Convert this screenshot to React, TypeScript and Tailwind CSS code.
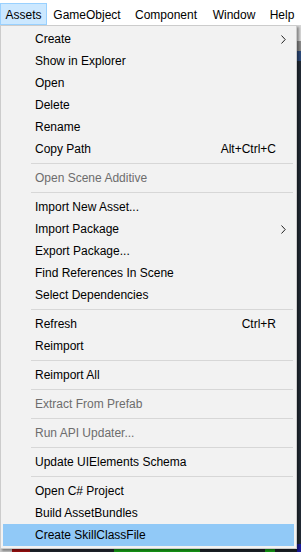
type Entry = { label: string; shortcut?: string; sub?: boolean; disabled?: boolean; active?: boolean } | 'sep';

const entries: Entry[] = [
  { label: 'Create', sub: true },
  { label: 'Show in Explorer' },
  { label: 'Open' },
  { label: 'Delete' },
  { label: 'Rename' },
  { label: 'Copy Path', shortcut: 'Alt+Ctrl+C' },
  'sep',
  { label: 'Open Scene Additive', disabled: true },
  'sep',
  { label: 'Import New Asset...' },
  { label: 'Import Package', sub: true },
  { label: 'Export Package...' },
  { label: 'Find References In Scene' },
  { label: 'Select Dependencies' },
  'sep',
  { label: 'Refresh', shortcut: 'Ctrl+R' },
  { label: 'Reimport' },
  'sep',
  { label: 'Reimport All' },
  'sep',
  { label: 'Extract From Prefab', disabled: true },
  'sep',
  { label: 'Run API Updater...', disabled: true },
  'sep',
  { label: 'Update UIElements Schema' },
  'sep',
  { label: 'Open C# Project' },
  { label: 'Build AssetBundles' },
  { label: 'Create SkillClassFile', active: true },
];

const menus = [
  { name: 'Assets', w: 'w-[47px]' },
  { name: 'GameObject', w: 'w-[80px]' },
  { name: 'Component', w: 'w-[78px]' },
  { name: 'Window', w: 'w-[58px]' },
  { name: 'Help', w: 'w-[38px]' },
];

// small thin submenu arrow, like the windows one
function SubArrow() {
  return (
    <svg width="5" height="9" viewBox="0 0 5 9" fill="none" stroke="#222" strokeWidth="1">
      <polyline points="0.5,0.5 4.2,4.5 0.5,8.5" />
    </svg>
  );
}

export default function App() {
  return (
    <div className="w-[301px] h-[552px] overflow-hidden bg-[#222a35] flex flex-col text-[12px] text-black" style={{ fontFamily: '"Liberation Sans", Arial, sans-serif' }}>
      {/* menu bar */}
      <div className="h-[25px] bg-white flex items-end shrink-0">
        {menus.map((m, i) => (
          <div key={m.name}
            className={`${m.w} h-[22px] flex items-center justify-center shrink-0 border pt-px ${i === 0 ? 'bg-[#cce8ff] border-[#99d1ff]' : 'border-transparent'}`}>
            {m.name}
          </div>
        ))}
      </div>

      <div className="flex flex-1 min-h-0">
        {/* dropdown */}
        <div className="w-[297px] shrink-0 flex flex-col">
          <div className="h-[524px] bg-[#f2f2f2] border border-[#cccccc] p-[2px] shadow-[2px_2px_2px_rgba(0,0,0,0.35)] relative z-10">
            {entries.map((e, i) =>
              e === 'sep' ? (
                <div key={i} className="h-[7px] flex items-center pl-[28px] pr-[1px]">
                  <div className="h-px w-full bg-[#d7d7d7]" />
                </div>
              ) : (
                <div key={i} className={`h-[22px] flex items-center pl-[32px] ${e.active ? 'bg-[#91c9f7]' : ''} ${e.disabled ? 'text-[#6d6d6d]' : ''}`}>
                  <span className="flex-1 whitespace-nowrap">{e.label}</span>
                  {e.shortcut && <span className="whitespace-nowrap">{e.shortcut}</span>}
                  <span className="w-[18px] flex items-center pl-[5px]">
                    {e.sub && <SubArrow />}
                  </span>
                </div>
              )
            )}
          </div>
          {/* editor bits below the menu */}
          <div className="flex-1 flex">
            <div className="w-[12px] bg-[#c8c8c8]" />
            <div className="w-[18px] bg-[#a01010]" />
            <div className="w-[84px] bg-[#20262e]" />
            <div className="w-[86px] bg-[#18a018]" />
            <div className="w-[65px] bg-[#1c2228]" />
            <div className="w-[10px] bg-[#18a018]" />
            <div className="flex-1 bg-[#1c2228]" />
          </div>
        </div>

        {/* editor strip on the right */}
        <div className="flex-1 flex flex-col">
          <div className="h-[16px] bg-[#d6d6d6]" />
          <div className="h-[10px] bg-[#8a8a8a]" />
          <div className="h-[10px] bg-[#2d4a7a]" />
          <div className="flex-1 bg-[#222a35]" />
          <div className="h-[8px] bg-[#1a1aa0]" />
        </div>
      </div>
    </div>
  );
}
